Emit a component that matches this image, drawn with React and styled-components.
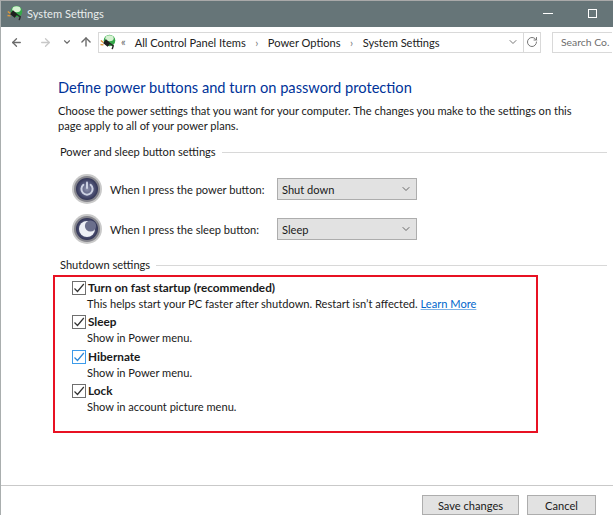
import React from 'react';
import styled, { createGlobalStyle } from 'styled-components';
import { ArrowLeft, ArrowRight, ArrowUp, ChevronDown, RotateCw } from 'lucide-react';

const Global = createGlobalStyle`
html, body { margin: 0; padding: 0; background: #fff; }
body { font-family: Lato, "Open Sans", sans-serif; font-size: 11.1px; color: #1a1a1a; }
* { box-sizing: border-box; }
`;

const Window = styled.div`
width: 613px;
height: 515px;
display: flex;
flex-direction: column;
border-left: 1px solid #a9aeae;
border-top: 1px solid #a9a9a9;
overflow: hidden;
background: #fff;
`;

const TitleBar = styled.div`
height: 26px;
flex: none;
background: #667578;
color: #e9eded;
display: flex;
align-items: center;
padding: 0 0 2px 6px;
gap: 4px;
`;

const Title = styled.div`
flex: 1;
`;

const WinButton = styled.div`
width: 41px;
height: 24px;
display: flex;
align-items: center;
justify-content: center;
`;

const Minimize = styled.div`
width: 10px;
height: 1px;
background: #fff;
`;

const Maximize = styled.div`
width: 9px;
height: 9px;
border: 1px solid #fff;
`;

const NavBar = styled.div`
height: 30px;
flex: none;
display: flex;
align-items: center;
padding-left: 9px;
`;

const NavIcon = styled.div`
width: ${p => p.$w}px;
flex: none;
display: flex;
align-items: center;
color: ${p => (p.$faint ? '#c8c8c8' : '#6b6b6b')};
`;

const Address = styled.div`
width: 443px;
height: 21px;
flex: none;
border: 1px solid #d9d9d9;
display: flex;
align-items: center;
padding-left: 1px;
color: #222;
`;

const Sep = styled.span`
color: #777;
font-size: 11px;
margin: 0 9.5px;
`;

const Chevrons = styled.span`
color: #666;
font-size: 11px;
margin: 0 9px 2px 5px;
`;

const AddressEnd = styled.div`
margin-left: auto;
height: 100%;
display: flex;
align-items: center;
color: #777;
`;

const Refresh = styled.div`
width: 17px;
height: 100%;
border-left: 1px solid #d9d9d9;
margin-left: 4px;
display: flex;
align-items: center;
justify-content: center;
`;

const Search = styled.div`
width: 60px;
height: 21px;
flex: none;
margin-left: 11px;
border: 1px solid #d9d9d9;
border-right: 0;
padding-left: 8px;
color: #6d6d6d;
font-size: 10.4px;
white-space: nowrap;
line-height: 18px;
`;

const Content = styled.div`
flex: 1;
min-height: 0;
padding: 21px 0 0 57px;
`;

const Heading = styled.h1`
margin: 0;
font-size: 14.65px;
font-weight: 400;
line-height: 20px;
color: #003399;
`;

const Intro = styled.p`
margin: 5px 0 0;
width: 530px;
line-height: 15px;
`;

const SectionHead = styled.div`
display: flex;
align-items: center;
gap: 6px;
width: 547px;
margin: ${p => p.$top}px 0 0 2px;
line-height: 16px;
&::after {
  content: '';
  flex: 1;
  height: 1px;
  background: #d8d8d8;
}
`;

const ButtonRow = styled.div`
display: flex;
align-items: center;
height: 32px;
margin: ${p => p.$top}px 0 0 14px;
`;

const RowLabel = styled.div`
width: 167px;
margin-left: 8px;
`;

const Select = styled.div`
width: 140px;
height: 22px;
background: #e2e2e2;
border: 1px solid #adadad;
display: flex;
align-items: center;
justify-content: space-between;
padding: 0 4px 0 4px;
`;

const RedBox = styled.div`
width: 485px;
height: 158px;
margin: 2px 0 0 -5px;
border: 2px solid #e81123;
padding: 2.5px 0 0 17px;
`;

const Option = styled.div`
display: grid;
grid-template-columns: 15px 1fr;
column-gap: 1px;
margin-bottom: 3.5px;
line-height: 16px;
`;

const Box = styled.div`
width: 14px;
height: 14px;
margin-top: 1px;
border: 1px solid ${p => (p.$focus ? '#3c9bea' : '#6f6f6f')};
display: flex;
align-items: center;
justify-content: center;
color: ${p => (p.$focus ? '#2a86d8' : '#333')};
`;

const OptionTitle = styled.div`
font-weight: 700;
font-size: 11.75px;
`;

const OptionText = styled.div`
grid-column: 2;
line-height: 15px;
margin-left: -1px;
`;

const LearnMore = styled.a`
color: #0066cc;
text-decoration: underline;
text-decoration-color: #7fb2e5;
`;

const Footer = styled.div`
height: 30px;
flex: none;
border-top: 1px solid #c9c9c9;
display: flex;
justify-content: flex-end;
gap: 8px;
padding: 9px 17px 0 0;
`;

const Btn = styled.div`
width: ${p => p.$w}px;
height: 20px;
flex: none;
background: #e2e2e2;
border: 1px solid #adadad;
display: flex;
align-items: center;
justify-content: center;
`;

const PlugIcon = () => (
  <svg width="16" height="16" viewBox="0 0 16 16">
    <circle cx="9.5" cy="6.5" r="5.8" fill="#35a84a" />
    <ellipse cx="9.5" cy="4.2" rx="4.2" ry="3" fill="#d6f2d2" />
    <path d="M10 9.5l3.2 2.4 -1 3.2" stroke="#2a2a2a" strokeWidth="1.5" fill="none" />
    <path d="M6 5.2l4.6 4 -3 3.6 -4.6 -3.8z" fill="#1f1f1f" />
    <path d="M0.8 6.5l2.6 2M0.5 10.5l3 0.4" stroke="#e09a3c" strokeWidth="1.4" />
  </svg>
);

const RoundButton = ({ sleep }) => {
  const id = sleep ? 'gs' : 'gp';
  return (
    <svg width="30" height="30" viewBox="0 0 30 30">
      <defs>
        <radialGradient id={id} cx="50%" cy="50%" r="55%">
          <stop offset="0" stopColor="#8d92ad" />
          <stop offset="0.6" stopColor="#4f5376" />
          <stop offset="1" stopColor="#2a2c4c" />
        </radialGradient>
      </defs>
      <circle cx="15" cy="15" r="15" fill="#c9c9c9" />
      <circle cx="15" cy="15" r="13" fill="#85858c" />
      <circle cx="15" cy="15" r="11" fill={`url(#${id})`} />
      {sleep ? (
        <>
          <circle cx="15" cy="15" r="8" fill="#eef0f6" />
          <circle cx="18.5" cy="12" r="5.6" fill="#6b6f8c" />
        </>
      ) : (
        <g stroke="#ccd1e2" strokeWidth="2" fill="none" strokeLinecap="round">
          <path d="M11.4 10.8 A5.6 5.6 0 1 0 18.6 10.8" />
          <path d="M15 8.5v5.5" />
        </g>
      )}
    </svg>
  );
};

const Check = () => (
  <svg width="12" height="12" viewBox="0 0 12 12">
    <path d="M1.5 6.5 L4.5 9.5 L10.8 2" stroke="currentColor" strokeWidth="1.2" fill="none" />
  </svg>
);

const options = [
  { title: 'Turn on fast startup (recommended)', text: 'This helps start your PC faster after shutdown. Restart isn’t affected. ', link: true },
  { title: 'Sleep', text: 'Show in Power menu.' },
  { title: 'Hibernate', text: 'Show in Power menu.', focus: true },
  { title: 'Lock', text: 'Show in account picture menu.' },
];

export default function App() {
  return (
    <>
      <Global />
      <Window>
        <TitleBar>
          <PlugIcon />
          <Title>System Settings</Title>
          <WinButton><Minimize /></WinButton>
          <WinButton><Maximize /></WinButton>
        </TitleBar>
        <NavBar>
          <NavIcon $w={29}><ArrowLeft size={13} strokeWidth={2.4} /></NavIcon>
          <NavIcon $w={23} $faint><ArrowRight size={13} strokeWidth={2.4} /></NavIcon>
          <NavIcon $w={17}><ChevronDown size={10} strokeWidth={2.6} /></NavIcon>
          <NavIcon $w={19}><ArrowUp size={14} strokeWidth={2.4} /></NavIcon>
          <Address>
            <PlugIcon />
            <Chevrons>«</Chevrons>
            <span>All Control Panel Items</span>
            <Sep>›</Sep>
            <span>Power Options</span>
            <Sep>›</Sep>
            <span>System Settings</span>
            <AddressEnd>
              <ChevronDown size={12} />
              <Refresh><RotateCw size={12} /></Refresh>
            </AddressEnd>
          </Address>
          <Search>Search Co.</Search>
        </NavBar>
        <Content>
          <Heading>Define power buttons and turn on password protection</Heading>
          <Intro>Choose the power settings that you want for your computer. The changes you make to the settings on this page apply to all of your power plans.</Intro>
          <SectionHead $top={11}>Power and sleep button settings</SectionHead>
          <ButtonRow $top={13}>
            <RoundButton />
            <RowLabel>When I press the power button:</RowLabel>
            <Select>Shut down<ChevronDown size={12} color="#666" /></Select>
          </ButtonRow>
          <ButtonRow $top={8}>
            <RoundButton sleep />
            <RowLabel>When I press the sleep button:</RowLabel>
            <Select>Sleep<ChevronDown size={12} color="#666" /></Select>
          </ButtonRow>
          <SectionHead $top={12}>Shutdown settings</SectionHead>
          <RedBox>
            {options.map(o => (
              <Option key={o.title}>
                <Box $focus={o.focus}><Check /></Box>
                <OptionTitle>{o.title}</OptionTitle>
                <OptionText>
                  {o.text}
                  {o.link && <LearnMore>Learn More</LearnMore>}
                </OptionText>
              </Option>
            ))}
          </RedBox>
        </Content>
        <Footer>
          <Btn $w={97}>Save changes</Btn>
          <Btn $w={69}>Cancel</Btn>
        </Footer>
      </Window>
    </>
  );
}
